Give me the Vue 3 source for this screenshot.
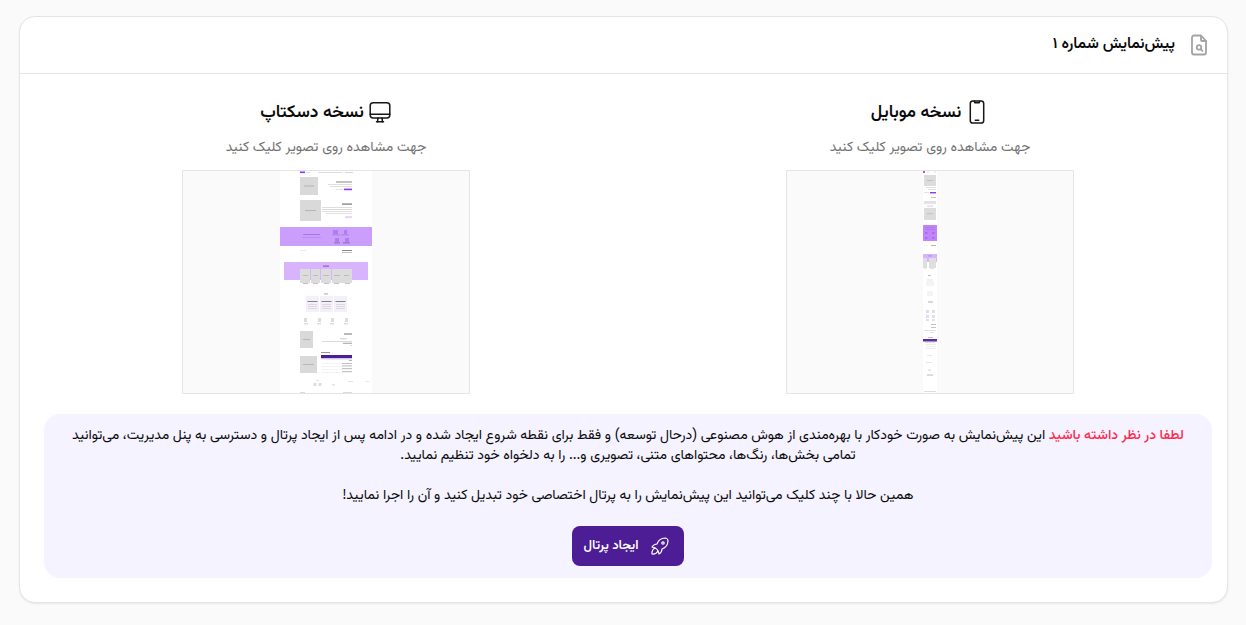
<script setup>
const desktopRects = [
  [280,171,92,222,'#ffffff'],
  [300,171.5,5,1.6,'#9333ea'],[306,172,4,.8,'#d4d4d4'],[318,172,24,.8,'#d4d4d4'],[345,172,8,.8,'#cfcfcf'],
  [300,177,18,18,'#d9d9d9'],[304,185.5,10,1,'#b4b4b4'],
  [336,181.5,16,1,'#8a8a8a'],[328,184,24,.7,'#d0d0d0'],[330,186,22,.7,'#d0d0d0'],[336,189,7,.7,'#d4d4d4'],[344,188.6,8,1.6,'#9333ea'],
  [300,200,21,21,'#d9d9d9'],[305,210,11,1,'#b4b4b4'],
  [342,203.5,10,1.2,'#777777'],[322,207,30,.7,'#d0d0d0'],[322,209,30,.7,'#c6c6c6'],[322,211,30,.7,'#d0d0d0'],[326,213,26,.7,'#d6d6d6'],[345,216,7,2.2,'#e9d5ff'],
  [280,227,92,19,'#cb9dfd'],
  [303,234,17,1,'#a578dc'],[302,237,19,.7,'#b58ae6'],[333,230,5,4,'#b07cf2'],[344,230,3,4,'#b07cf2'],[332,234.5,8,.8,'#a578dc'],[341,234.5,8,.8,'#a578dc'],[335,238,4,4,'#b07cf2'],[345,238,4,4,'#b07cf2'],[334,242.5,6,.8,'#7c58ac'],[343,242.5,7,.8,'#7c58ac'],
  [342,250,10,1,'#888888'],[342,252,10,.7,'#aaaaaa'],[300,250,6,.7,'#e9d5ff'],
  [284,262,84,18,'#d8b4fe'],[323,265.5,6,1.2,'#8b5fb8'],
  [300,269,10,14,'#dcdcdc'],[311,269,9,14,'#dcdcdc'],[321,269,10,14,'#dcdcdc'],[332,269,10,14,'#dcdcdc'],[342,269,10,14,'#dcdcdc'],
  [303,275,5,.8,'#b4b4b4'],[313,275,5,.8,'#b4b4b4'],[323,275,6,.8,'#b4b4b4'],[334,275,6,.8,'#b4b4b4'],[344,275,5,.8,'#b4b4b4'],
  [303,283,5,.8,'#b5b5b5'],[313,283,5,.8,'#b5b5b5'],[324,283,5,.8,'#b5b5b5'],[334,283,5,.8,'#b5b5b5'],[345,283,5,.8,'#b5b5b5'],
  [324,293.5,4,.9,'#999999'],
  [306,296,13,16,'#f4f0fa'],[320,296,13,16,'#f4f0fa'],[334,296,13,16,'#f4f0fa'],
  [307.5,301,10,.9,'#777777'],[321.5,301,10,.9,'#777777'],[335.5,301,10,.9,'#777777'],
  [308,304,9,.6,'#cccccc'],[308,306,9,.6,'#cccccc'],[308,308,9,.6,'#cccccc'],[322,304,9,.6,'#cccccc'],[322,306,9,.6,'#cccccc'],[322,308,9,.6,'#cccccc'],[336,304,9,.6,'#cccccc'],[336,306,9,.6,'#cccccc'],[336,308,9,.6,'#cccccc'],
  [304,318,3,4,'#dddddd'],[318,318,3,4,'#dddddd'],[331,318,3,4,'#dddddd'],[345,318,3,4,'#dddddd'],
  [304,323.5,4,.7,'#bbbbbb'],[317,323.5,4,.7,'#bbbbbb'],[330,323.5,4,.7,'#bbbbbb'],[344,323.5,4,.7,'#bbbbbb'],
  [300,331,13,17,'#d9d9d9'],[303,339,7,.9,'#b4b4b4'],
  [344,333.5,8,1,'#777777'],[340,338.5,7,.7,'#bbbbbb'],[322,341,30,.7,'#cccccc'],[343,342.8,9,.8,'#888888'],[350,345,2,.7,'#cccccc'],
  [300,356,17,17,'#d9d9d9'],[303,364,11,.9,'#b4b4b4'],
  [321,352,9,.9,'#888888'],[321,355,31,3,'#4c1d95'],[321,358.5,31,.7,'#a78bda'],[349,360,3,.7,'#999999'],
  [322,363,30,.5,'#e4e4e4'],[322,366,30,.5,'#e4e4e4'],[322,369,30,.5,'#e4e4e4'],[322,372,30,.5,'#e4e4e4'],
  [342,363,10,.7,'#aaaaaa'],[342,365.5,10,.7,'#aaaaaa'],[342,368,10,.7,'#aaaaaa'],[342,371,10,.7,'#aaaaaa'],
  [316,380,3,.6,'#d8c8f0'],[348,381,5,.6,'#d8c8f0'],[365,381,5,.6,'#e4d8f5'],
  [313.5,383,3,3,'#dddddd'],[318.5,383,3,3,'#dddddd'],[332,384,3,1.5,'#e4e4e4'],
  [300,392,5,.7,'#cccccc'],[343,392,9,.7,'#cccccc'],
];
const mobileRects = [
  [923,171,14,222,'#ffffff'],
  [923,171,2,2,'#a855f7'],[927,171.5,2,1,'#e0e0e0'],[934,171.5,2,1,'#e0e0e0'],
  [924,175,12,11,'#dcdcdc'],[927,180,6,.7,'#b4b4b4'],
  [926,187,10,.6,'#cccccc'],[928,189,8,.6,'#cccccc'],[924,192,5,1,'#e4e4e4'],[930,192,6,1.4,'#9333ea'],
  [931,197,5,.7,'#aaaaaa'],[924,201,12,.6,'#cfcfcf'],[924,202,12,.6,'#cfcfcf'],[924,203.5,12,.6,'#cfcfcf'],[927,205.5,6,1.4,'#e9d5ff'],
  [924,208,12,12,'#dcdcdc'],[927,213.5,6,.7,'#b4b4b4'],
  [923,225,14,16,'#c084fc'],[925,227,10,.7,'#a870e4'],[925,229,10,.7,'#a870e4'],[925,232,2.5,2,'#a870e4'],[932,232,2.5,2,'#a870e4'],[925,237,2.5,2,'#a870e4'],[932,237,2.5,2,'#a870e4'],
  [931,245,5,.7,'#999999'],[924,245,5,.4,'#e4e4e4'],
  [923,254,14,8,'#d8b4fe'],[928,255.5,4,.8,'#a67ed0'],
  [923,258,4,10,'#dedede'],[929,258,7,10,'#dedede'],[930,268.5,4,.6,'#cccccc'],[924,268.5,2,.6,'#cccccc'],
  [928,275,3,.8,'#aaaaaa'],[927,279,6,3,'#f0f0f0'],[926,281,8,5,'#f4f4f4'],[927,291,6,5,'#f4f4f4'],[928,301,5,2,'#d8d8d8'],
  [926,310,3,3,'#e4dcf2'],[932,310,3,3,'#e4dcf2'],[926,315,3,3,'#e4dcf2'],[932,315,3,3,'#e4dcf2'],[926,319,3,2,'#e4dcf2'],[932,319,3,2,'#e4dcf2'],
  [931,324,5,.7,'#aaaaaa'],[931,327,5,.7,'#aaaaaa'],[924,330,12,.6,'#cccccc'],[930,332,4,.6,'#cccccc'],
  [928,337,5,.6,'#999999'],[923,339,14,2.5,'#5b2aa5'],[925,342,10,.6,'#cccccc'],[926,344,10,.5,'#dddddd'],[926,346,10,.5,'#dddddd'],[926,348,10,.5,'#dddddd'],
  [927,355,5,.8,'#e4e4e4'],[926,362,6,1,'#e4e4f8'],[928,369,3,2,'#e8e8e8'],[927,374,6,2,'#dcdcdc'],[924,391,12,1,'#dddddd'],
];
</script>

<template>
  <main class="page" dir="rtl">
    <section class="card">
      <header class="card-head">
        <svg class="head-icon" viewBox="0 0 24 24" fill="none" stroke="#a3a3a3" stroke-width="1.8" stroke-linecap="round" stroke-linejoin="round">
          <path d="M14 3v4a1 1 0 0 0 1 1h4" />
          <path d="M14 2.5H7a2 2 0 0 0-2 2v15a2 2 0 0 0 2 2h10a2 2 0 0 0 2-2V8z" />
          <circle cx="12" cy="14.4" r="2.2" />
          <path d="M13.8 16.2l1.6 1.6" />
        </svg>
        <h1>پیش‌نمایش شماره ۱</h1>
      </header>

      <div class="card-body">
        <div class="previews">
          <div class="preview">
            <h2>
              <svg class="title-icon" viewBox="0 0 24 24" fill="none" stroke="#171717" stroke-width="1.5" stroke-linecap="round" stroke-linejoin="round">
                <rect x="5.3" y="1" width="13.4" height="22" rx="2.6" />
                <path d="M9.5 1.3v.6a.8.8 0 0 0 .8.8h3.4a.8.8 0 0 0 .8-.8v-.6" />
                <path d="M10.3 20.2h3.4" />
              </svg>
              <span>نسخه موبایل</span>
            </h2>
            <p>جهت مشاهده روی تصویر کلیک کنید</p>
            <div class="thumb">
              <svg viewBox="786 170 288 224" width="288" height="224">
                <rect v-for="(r, i) in mobileRects" :key="i" :x="r[0]" :y="r[1]" :width="r[2]" :height="r[3]" :fill="r[4]" />
              </svg>
            </div>
          </div>
          <div class="preview">
            <h2>
              <svg class="title-icon" viewBox="0 0 24 24" fill="none" stroke="#171717" stroke-width="1.5" stroke-linecap="round" stroke-linejoin="round">
                <rect x="2.2" y="2.8" width="19.6" height="15.2" rx="3" />
                <path d="M2.2 14.2h19.6" />
                <path d="M8.5 21.8h7" />
                <path d="M10 18l-.5 3.8M14 18l.5 3.8" />
              </svg>
              <span>نسخه دسکتاپ</span>
            </h2>
            <p>جهت مشاهده روی تصویر کلیک کنید</p>
            <div class="thumb">
              <svg viewBox="182 170 288 224" width="288" height="224">
                <rect v-for="(r, i) in desktopRects" :key="i" :x="r[0]" :y="r[1]" :width="r[2]" :height="r[3]" :fill="r[4]" />
              </svg>
            </div>
          </div>
        </div>

        <div class="notice">
          <p class="notice-text">
            <strong>لطفا در نظر داشته باشید</strong>
            این پیش‌نمایش به صورت خودکار با بهره‌مندی از هوش مصنوعی (درحال توسعه) و فقط برای نقطه شروع ایجاد شده و در ادامه پس از ایجاد پرتال و دسترسی به پنل مدیریت، می‌توانید تمامی بخش‌ها، رنگ‌ها، محتواهای متنی، تصویری و... را به دلخواه خود تنظیم نمایید.
          </p>
          <p class="notice-text">همین حالا با چند کلیک می‌توانید این پیش‌نمایش را به پرتال اختصاصی خود تبدیل کنید و آن را اجرا نمایید!</p>
          <button class="cta" type="button">
            <svg viewBox="0 0 24 24" fill="none" stroke="#ffffff" stroke-width="1.2" stroke-linecap="round" stroke-linejoin="round">
              <path d="M4 13a8 8 0 0 1 7 7a6 6 0 0 0 3-5a9 9 0 0 0 6-8a3 3 0 0 0-3-3a9 9 0 0 0-8 6a6 6 0 0 0-5 3" />
              <path d="M7 14a6 6 0 0 0-3 6a6 6 0 0 0 6-3" />
              <circle cx="15" cy="9" r="1.2" />
            </svg>
            <span>ایجاد پرتال</span>
          </button>
        </div>
      </div>
    </section>
  </main>
</template>

<style scoped>
.page {
  box-sizing: border-box;
  width: 1246px;
  height: 625px;
  padding: 16px 18px 0 19px;
  background: #fafafa;
  font-family: Vazirmatn, "Noto Sans Arabic", "Noto Sans", sans-serif;
  color: #0a0a0a;
}
.card {
  box-sizing: border-box;
  height: 587px;
  background: #fff;
  border: 1px solid #e5e5e5;
  border-radius: 16px;
  box-shadow: 0 1px 2px rgba(0, 0, 0, 0.08);
}
.card-head {
  display: flex;
  align-items: center;
  gap: 12px;
  height: 56px;
  padding: 0 16px;
  border-bottom: 1px solid #e5e5e5;
}
.head-icon {
  width: 24px;
  height: 24px;
}
h1 {
  margin: 0 0 2px;
  font-size: 15.5px;
  font-weight: 600;
}
.card-body {
  padding: 0 15px 0 24px;
}
.previews {
  display: flex;
  justify-content: space-between;
}
.preview {
  display: flex;
  flex-direction: column;
  align-items: center;
  width: 564px;
  padding-top: 26px;
}
h2 {
  display: flex;
  align-items: center;
  gap: 4px;
  height: 24px;
  margin: 0;
  font-size: 17.4px;
  font-weight: 600;
}
.title-icon {
  width: 24px;
  height: 24px;
}
.preview p {
  margin: 14px 0 12px;
  font-size: 14px;
  line-height: 20px;
  color: #737373;
}
.thumb {
  box-sizing: border-box;
  width: 288px;
  height: 224px;
  overflow: hidden;
  background: #fafafa;
  outline: 1px solid #e5e5e5;
  outline-offset: -1px;
}
.thumb svg {
  display: block;
  filter: blur(0.5px);
}
.notice {
  display: flex;
  flex-direction: column;
  align-items: center;
  height: 164px;
  box-sizing: border-box;
  margin-top: 20px;
  padding: 12px 24px 12px;
  background: #f5f3ff;
  border-radius: 16px;
}
.notice-text {
  margin: 0 0 20px;
  font-size: 14px;
  line-height: 20px;
  text-align: center;
  word-spacing: -0.1px;
}
.notice-text strong {
  color: #ff2b4e;
  font-weight: 500;
}
.cta {
  display: flex;
  align-items: center;
  justify-content: center;
  gap: 10px;
  width: 112px;
  height: 40px;
  margin-top: 0;
  padding: 0;
  border: 0;
  border-radius: 8px;
  background: #4c1d95;
  color: #fff;
  font: 600 13px Vazirmatn, "Noto Sans Arabic", "Noto Sans", sans-serif;
}
.cta svg {
  width: 24px;
  height: 24px;
}
</style>
